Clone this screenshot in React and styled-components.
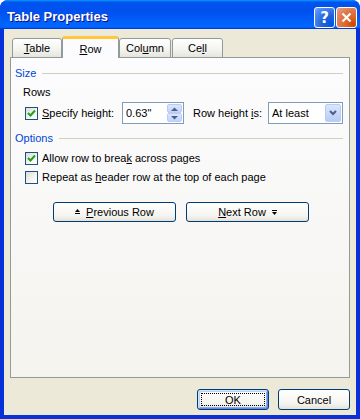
import React from 'react';
import styled, { createGlobalStyle } from 'styled-components';

const GlobalStyle = createGlobalStyle`
  html, body {
    margin: 0;
    padding: 0;
    background: #fff;
  }
  body {
    font-family: "Liberation Sans", Arial, sans-serif;
    font-size: 11px;
    color: #000;
  }
`;

const Window = styled.div`
  width: 360px;
  height: 419px;
  display: flex;
  flex-direction: column;
  background: #0831d9;
  border-radius: 8px 8px 0 0;
  overflow: hidden;
  box-sizing: border-box;
`;

const TitleBar = styled.div`
  height: 29px;
  flex-shrink: 0;
  box-sizing: border-box;
  padding: 6px 3px 0 7px;
  display: flex;
  align-items: flex-start;
  background: linear-gradient(
    180deg,
    #0997ff 0%,
    #0053ee 8%,
    #0050ee 40%,
    #0066ff 88%,
    #0066ff 93%,
    #005bff 95%,
    #003dd7 96%,
    #003dd7 100%
  );
`;

const Title = styled.div`
  flex: 1;
  height: 21px;
  line-height: 21px;
  font-family: "Liberation Sans", Arial, sans-serif;
  font-weight: bold;
  font-size: 13px;
  color: #fff;
  text-shadow: 1px 1px #0f1089;
`;

const CaptionButton = styled.div`
  width: 21px;
  height: 21px;
  box-sizing: border-box;
  margin-left: ${(p) => (p.$gap ? '1px' : '0')};
  margin-top: 1px;
  border: 1px solid #fff;
  border-radius: 3px;
  display: flex;
  align-items: center;
  justify-content: center;
  color: #fff;
  font-weight: bold;
  font-size: 15px;
  font-family: "DejaVu Sans", sans-serif;
  background: ${(p) =>
    p.$close
      ? 'radial-gradient(circle at 85% 85%, #cc4600 0%, #dc6527 30%, #e0784a 60%, #e8a284 100%)'
      : 'radial-gradient(circle at 85% 85%, #0054e9 0%, #2263d5 40%, #4f8dfa 80%, #7aa6f6 100%)'};
`;

const Body = styled.div`
  flex: 1;
  margin: 0 4px 4px 4px;
  background: #ece9d8;
  padding: 7px 6px 0 6px;
  display: flex;
  flex-direction: column;
`;

const TabStrip = styled.div`
  display: flex;
  align-items: flex-end;
  padding-left: 2px;
  margin-bottom: -1px;
  position: relative;
  z-index: 1;
`;

const Tab = styled.div`
  width: ${(p) => p.$w}px;
  margin-right: ${(p) => p.$mr || 0}px;
  box-sizing: border-box;
  height: ${(p) => (p.$active ? 22 : 20)}px;
  border: 1px solid #919b9c;
  border-bottom: ${(p) => (p.$active ? 'none' : '1px solid #919b9c')};
  border-top: ${(p) => (p.$active ? '3px solid #ffc83c' : '1px solid #919b9c')};
  border-radius: 3px 3px 0 0;
  background: ${(p) =>
    p.$active ? '#fcfcfe' : 'linear-gradient(180deg, #ffffff 0%, #f3f3ef 60%, #e6e4dc 100%)'};
  display: flex;
  align-items: center;
  justify-content: center;
  padding-bottom: ${(p) => (p.$active ? 0 : 1)}px;
  white-space: nowrap;
`;

const Panel = styled.div`
  height: 321px;
  box-sizing: border-box;
  border: 1px solid #919b9c;
  background: linear-gradient(180deg, #fcfcfe 0%, #f4f3ee 100%);
  padding: 8px 6px 0 4px;
  display: flex;
  flex-direction: column;
  white-space: nowrap;
`;

const SectionHeader = styled.div`
  display: flex;
  align-items: center;
  height: 14px;
  margin-top: ${(p) => p.$mt || 0}px;
  color: #0046d5;

  &::after {
    content: '';
    flex: 1;
    height: 1px;
    background: #d0d0bf;
    margin-left: 6px;
  }
`;

const Plain = styled.div`
  height: 14px;
  line-height: 14px;
  margin-top: 5px;
  padding-left: 8px;
`;

const ControlRow = styled.div`
  display: flex;
  align-items: center;
  height: 22px;
  margin-top: 3px;
  padding-left: 10px;
`;

const CheckLine = styled.label`
  display: flex;
  align-items: center;
  height: 16px;
  margin-top: ${(p) => p.$mt || 0}px;
  padding-left: ${(p) => (p.$flush ? 0 : 10)}px;
  width: ${(p) => (p.$w ? p.$w + 'px' : 'auto')};
  box-sizing: border-box;
  flex-shrink: 0;
`;

const Box = styled.span`
  width: 13px;
  height: 13px;
  box-sizing: border-box;
  border: 1px solid #1c5180;
  background: linear-gradient(135deg, #dcdcd7 0%, #f5f5f1 60%, #ffffff 100%);
  display: inline-flex;
  align-items: center;
  justify-content: center;
  margin-right: 4px;
  flex-shrink: 0;
`;

const U = styled.span`
  text-decoration: underline;
  text-underline-offset: 1px;
`;

const SpinBox = styled.div`
  width: 62px;
  height: 22px;
  box-sizing: border-box;
  border: 1px solid #7f9db9;
  background: #fff;
  display: flex;
  align-items: center;
  padding: 1px;
`;

const FieldText = styled.div`
  flex: 1;
  padding-left: 2px;
`;

const SpinButtons = styled.div`
  width: 15px;
  height: 18px;
  display: flex;
  flex-direction: column;
`;

const SpinHalf = styled.div`
  flex: 1;
  border-radius: 2px;
  border: 1px solid #bccbf0;
  background: linear-gradient(180deg, #dbe6fe 0%, #c3d3fd 100%);
  display: flex;
  align-items: center;
  justify-content: center;
`;

const InlineLabel = styled.div`
  margin-left: ${(p) => p.$ml}px;
  width: ${(p) => p.$w}px;
  flex-shrink: 0;
`;

const Select = styled.div`
  width: 75px;
  height: 22px;
  box-sizing: border-box;
  border: 1px solid #7f9db9;
  background: #fff;
  display: flex;
  align-items: center;
  padding: 1px;
`;

const DropButton = styled.div`
  width: 16px;
  height: 18px;
  box-sizing: border-box;
  border-radius: 2px;
  border: 1px solid #bccbf0;
  background: linear-gradient(180deg, #dbe6fe 0%, #b9cbf8 100%);
  display: flex;
  align-items: center;
  justify-content: center;
`;

const NavRow = styled.div`
  display: flex;
  gap: 10px;
  margin-top: 17px;
  padding-left: 38px;
`;

const XpButton = styled.div`
  position: relative;
  width: ${(p) => p.$w}px;
  height: ${(p) => p.$h || 20}px;
  box-sizing: border-box;
  border: 1px solid #003c74;
  border-radius: 3px;
  background: linear-gradient(180deg, #ffffff 0%, #f5f4ef 70%, #e3e2da 100%);
  display: flex;
  align-items: center;
  justify-content: center;
  gap: 6px;
  box-shadow: ${(p) =>
    p.$default
      ? 'inset 1px 1px #cee7ff, inset -1px -1px #6982ee, inset 2px 2px #bcd4f6, inset -2px -2px #89ade4'
      : 'none'};

  &::after {
    content: '';
    display: ${(p) => (p.$default ? 'block' : 'none')};
    position: absolute;
    inset: 3px;
    border: 1px dotted #000;
  }
`;

const Footer = styled.div`
  display: flex;
  justify-content: flex-end;
  gap: 9px;
  margin-top: 11px;
`;

const Check = () => (
  <svg width="9" height="9" viewBox="0 0 9 9">
    <path d="M1 4 L3.5 6.5 L8 1.5" fill="none" stroke="#21a121" strokeWidth="2" />
  </svg>
);

const Arrow = ({ dir }) => (
  <svg width="7" height="4" viewBox="0 0 7 4">
    <path d={dir === 'up' ? 'M0 4 L3.5 0.5 L7 4 Z' : 'M0 0 L3.5 3.5 L7 0 Z'} fill="#4d6185" />
  </svg>
);

const NavGlyph = ({ dir }) => (
  <svg width="5" height="6" viewBox="0 0 5 6">
    {dir === 'up' ? (
      <>
        <path d="M0 3 L2.5 0 L5 3 Z" fill="#000" />
        <rect x="0" y="4" width="5" height="1" fill="#000" />
      </>
    ) : (
      <>
        <rect x="0" y="1" width="5" height="1" fill="#000" />
        <path d="M0 3 L2.5 6 L5 3 Z" fill="#000" />
      </>
    )}
  </svg>
);

const Chevron = () => (
  <svg width="8" height="6" viewBox="0 0 8 6">
    <path d="M1 1 L4 4 L7 1" fill="none" stroke="#4d6185" strokeWidth="2" />
  </svg>
);

const App = () => {
  return (
    <Window>
      <GlobalStyle />
      <TitleBar>
        <Title>Table Properties</Title>
        <CaptionButton>?</CaptionButton>
        <CaptionButton $close $gap>
          <svg width="11" height="11" viewBox="0 0 11 11">
            <path d="M1.5 1.5 L9.5 9.5 M9.5 1.5 L1.5 9.5" stroke="#fff" strokeWidth="2.2" />
          </svg>
        </CaptionButton>
      </TitleBar>
      <Body>
        <TabStrip>
          <Tab $w={50}>
            <span><U>T</U>able</span>
          </Tab>
          <Tab $w={57} $active>
            <span><U>R</U>ow</span>
          </Tab>
          <Tab $w={52} $mr={1}>
            <span>Col<U>u</U>mn</span>
          </Tab>
          <Tab $w={51}>
            <span>Ce<U>l</U>l</span>
          </Tab>
        </TabStrip>
        <Panel>
          <SectionHeader>Size</SectionHeader>
          <Plain>Rows</Plain>
          <ControlRow>
            <CheckLine $w={97} $flush>
              <Box>
                <Check />
              </Box>
              <span><U>S</U>pecify height:</span>
            </CheckLine>
            <SpinBox>
              <FieldText>0.63"</FieldText>
              <SpinButtons>
                <SpinHalf>
                  <Arrow dir="up" />
                </SpinHalf>
                <SpinHalf>
                  <Arrow dir="down" />
                </SpinHalf>
              </SpinButtons>
            </SpinBox>
            <InlineLabel $ml={9} $w={75}>
              Row height <U>i</U>s:
            </InlineLabel>
            <Select>
              <FieldText>At least</FieldText>
              <DropButton>
                <Chevron />
              </DropButton>
            </Select>
          </ControlRow>
          <SectionHeader $mt={7}>Options</SectionHeader>
          <CheckLine $mt={5}>
            <Box>
              <Check />
            </Box>
            <span>Allow row to brea<U>k</U> across pages</span>
          </CheckLine>
          <CheckLine $mt={3}>
            <Box />
            <span>Repeat as <U>h</U>eader row at the top of each page</span>
          </CheckLine>
          <NavRow>
            <XpButton $w={123}>
              <NavGlyph dir="up" />
              <span><U>P</U>revious Row</span>
            </XpButton>
            <XpButton $w={123}>
              <span><U>N</U>ext Row</span>
              <NavGlyph dir="down" />
            </XpButton>
          </NavRow>
        </Panel>
        <Footer>
          <XpButton $w={72} $h={21} $default>
            OK
          </XpButton>
          <XpButton $w={72} $h={21}>
            Cancel
          </XpButton>
        </Footer>
      </Body>
    </Window>
  );
};

export default App;
